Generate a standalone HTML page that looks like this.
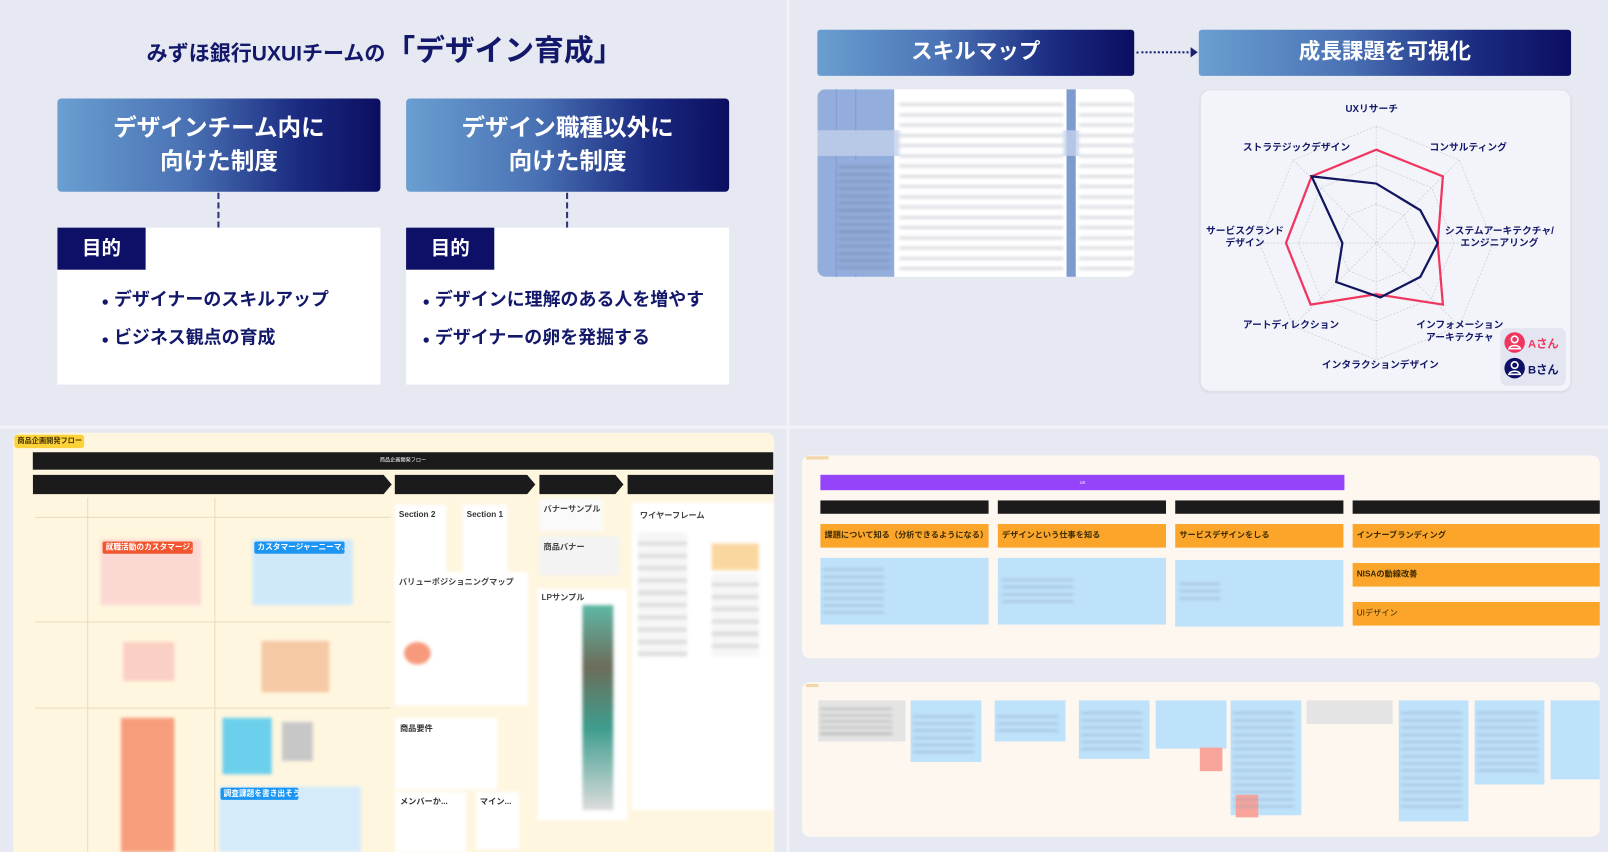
<!DOCTYPE html>
<html><head><meta charset="utf-8">
<style>
*{margin:0;padding:0;box-sizing:border-box}
html,body{width:1608px;height:852px;overflow:hidden;background:#e6e9f2}
body{font-family:"Liberation Sans","Noto Sans CJK JP",sans-serif}
#w{position:absolute;left:0;top:0;width:1568px;height:831px;transform:scale(1.0255);transform-origin:0 0;background:#e6e9f2}
.a{position:absolute}
.hd{background:linear-gradient(90deg,#6a9fd1 0%,#4a72b4 40%,#1a2a80 75%,#0c0e60 100%);border-radius:4px;color:#fff;font-weight:bold;text-align:center}
.nv{color:#13186a;font-weight:bold}
.bl{filter:blur(1.6px)}
.bk{background:#1b1b1b}
.or{background:#fca52b;color:#3a2a00;font-weight:bold;font-size:8px;padding:6px 4px;line-height:10px}
.sb{background:#bfe2fb}
.gr{background:#e4e4e4}
.lab{position:absolute;font-size:9.5px;font-weight:bold;color:#13186a;text-align:center;line-height:12px;white-space:nowrap}
.ln{background:repeating-linear-gradient(180deg,transparent 0 3px,#8aa0b8 3px 4px,transparent 4px 7px)}
</style></head><body>
<div id="w">
<div class="a" style="left:767px;top:0;width:3px;height:831px;background:#f1f3f8"></div>
<div class="a" style="left:0;top:415px;width:1568px;height:3px;background:#f1f3f8"></div>

<!-- TOP LEFT -->
<div class="a nv" style="left:143px;top:26px;white-space:nowrap"><span style="font-size:20.5px">みずほ銀行UXUIチームの</span><span style="font-size:29px">「デザイン育成」</span></div>
<div class="a hd" style="left:56px;top:96px;width:315px;height:91px;font-size:23px;line-height:33px;padding-top:12px">デザインチーム内に<br>向けた制度</div>
<div class="a hd" style="left:396px;top:96px;width:315px;height:91px;font-size:23px;line-height:33px;padding-top:12px">デザイン職種以外に<br>向けた制度</div>
<div class="a" style="left:212px;top:188px;height:34px;border-left:2px dashed #2c3378"></div>
<div class="a" style="left:552px;top:188px;height:34px;border-left:2px dashed #2c3378"></div>
<div class="a" style="left:56px;top:222px;width:315px;height:153px;background:#fff"></div>
<div class="a" style="left:396px;top:222px;width:315px;height:153px;background:#fff"></div>
<div class="a" style="left:56px;top:222px;width:86px;height:41px;background:#0d1066;color:#fff;font-size:19px;font-weight:bold;line-height:41px;padding-left:24px">目的</div>
<div class="a" style="left:396px;top:222px;width:86px;height:41px;background:#0d1066;color:#fff;font-size:19px;font-weight:bold;line-height:41px;padding-left:24px">目的</div>
<div class="a nv" style="left:99px;top:275px;font-size:17.5px;line-height:35px;white-space:nowrap"><span style="font-size:12px">●</span> デザイナーのスキルアップ<br><span style="font-size:12px">●</span> ビジネス観点の育成</div>
<div class="a nv" style="left:412px;top:275px;font-size:17.5px;line-height:35px;white-space:nowrap"><span style="font-size:12px">●</span> デザインに理解のある人を増やす<br><span style="font-size:12px">●</span> デザイナーの卵を発掘する</div>

<!-- TOP RIGHT -->
<div class="a hd" style="left:797px;top:29px;width:309px;height:45px;font-size:21px;line-height:43px;border-radius:3px">スキルマップ</div>
<div class="a hd" style="left:1169px;top:29px;width:363px;height:45px;font-size:21px;line-height:43px;border-radius:3px">成長課題を可視化</div>
<div class="a" style="left:1108px;top:50px;width:55px;border-top:2px dotted #1a2070"></div>
<div class="a" style="left:1161px;top:46px;width:0;height:0;border-left:7px solid #1a2070;border-top:5px solid transparent;border-bottom:5px solid transparent"></div>
<div class="a" style="left:797px;top:87px;width:309px;height:183px;border-radius:8px;overflow:hidden;background:#fff">
 <div class="a" style="left:0;top:0;width:75px;height:183px;background:#93aedc"></div>
 <div class="a" style="left:18px;top:0;width:1px;height:183px;background:#7e9bd0"></div>
 <div class="a" style="left:37px;top:0;width:1px;height:183px;background:#7e9bd0"></div>
 <div class="a" style="left:243px;top:0;width:9px;height:183px;background:#7e9bd0"></div>
 <div class="a" style="left:0;top:40px;width:309px;height:25px;background:#c2d0ea;opacity:.8"></div>
 <div class="a bl" style="left:80px;top:10px;width:160px;height:170px;background:repeating-linear-gradient(180deg,#fff 0 4px,#c8cbd3 4px 6px,#fff 6px 10px)"></div>
 <div class="a bl" style="left:255px;top:10px;width:54px;height:170px;background:repeating-linear-gradient(180deg,#fff 0 4px,#c8cbd3 4px 6px,#fff 6px 10px)"></div>
 <div class="a bl" style="left:20px;top:70px;width:52px;height:110px;background:repeating-linear-gradient(180deg,#93aedc 0 5px,#7b8fb8 5px 7px)"></div>
</div>
<div class="a" style="left:1170px;top:87px;width:362px;height:295px;background:#f3f4f9;border:1px solid #dfe1ea;border-radius:10px;box-shadow:0 1px 2px rgba(0,0,0,.06)"></div>
<svg class="a" style="left:1170px;top:87px" width="362" height="295" viewBox="1170 87 362 295">
 <g fill="none" stroke="#cfd1d9" stroke-width="0.8" stroke-dasharray="2 1.5">
  <polygon points="1342,123 1423,156 1456,237 1423,318 1342,351 1261,318 1228,237 1261,156"/>
  <polygon points="1342,161 1396,183 1418,237 1396,291 1342,313 1288,291 1266,237 1288,183"/>
  <polygon points="1342,199 1369,210 1380,237 1369,264 1342,275 1315,264 1304,237 1315,210"/>
  <line x1="1342" y1="123" x2="1342" y2="351"/><line x1="1228" y1="237" x2="1456" y2="237"/>
  <line x1="1261" y1="156" x2="1423" y2="318"/><line x1="1423" y1="156" x2="1261" y2="318"/>
 </g>
 <polygon points="1342,146 1407,172 1402,237 1407,297 1342,287 1278,297 1254,237 1279,172" fill="none" stroke="#f0365f" stroke-width="2.2"/>
 <polygon points="1342,179 1385,205 1402,237 1385,270 1346,290 1303,275 1309,237 1279,172" fill="none" stroke="#12165f" stroke-width="2.2"/>
</svg>
<div class="lab" style="left:1312px;top:101px">UXリサーチ</div>
<div class="lab" style="left:1212px;top:139px">ストラテジックデザイン</div>
<div class="lab" style="left:1394px;top:139px">コンサルティング</div>
<div class="lab" style="left:1176px;top:220px">サービスグランド<br>デザイン</div>
<div class="lab" style="left:1409px;top:220px">システムアーキテクチャ/<br>エンジニアリング</div>
<div class="lab" style="left:1212px;top:312px">アートディレクション</div>
<div class="lab" style="left:1381px;top:312px">インフォメーション<br>アーキテクチャ</div>
<div class="lab" style="left:1289px;top:351px">インタラクションデザイン</div>
<div class="a" style="left:1463px;top:320px;width:64px;height:56px;background:#e3e5f0;border-radius:6px"></div>
<svg class="a" style="left:1466px;top:323px" width="22" height="50">
 <circle cx="11" cy="11" r="10" fill="#f0365f"/><circle cx="11" cy="8" r="3.2" fill="none" stroke="#fff" stroke-width="1.6"/><path d="M5.5 17c1-4 10-4 11 0z" fill="none" stroke="#fff" stroke-width="1.6"/>
 <circle cx="11" cy="36" r="10" fill="#0d1066"/><circle cx="11" cy="33" r="3.2" fill="none" stroke="#fff" stroke-width="1.6"/><path d="M5.5 42c1-4 10-4 11 0z" fill="none" stroke="#fff" stroke-width="1.6"/>
</svg>
<div class="a" style="left:1490px;top:327px;font-size:11px;font-weight:bold;color:#f0365f">Aさん</div>
<div class="a" style="left:1490px;top:352px;font-size:11px;font-weight:bold;color:#13186a">Bさん</div>

<!-- BOTTOM LEFT -->
<div class="a" style="left:13px;top:422px;width:742px;height:409px;background:#fff6df;border-radius:8px 8px 0 0"></div>
<div class="a" style="left:14px;top:424px;width:68px;height:13px;background:#fcd238;border-radius:3px;font-size:7px;font-weight:bold;color:#443300;line-height:13px;padding-left:3px">商品企画開発フロー</div>
<div class="a bk" style="left:32px;top:441px;width:722px;height:17px;color:#fff;font-size:5px;text-align:center;line-height:17px">商品企画開発フロー</div>
<svg class="a" style="left:32px;top:463px" width="722" height="19">
 <polygon points="0,0 342,0 350,9.5 342,19 0,19" fill="#1b1b1b"/>
 <polygon points="353,0 482,0 490,9.5 482,19 353,19" fill="#1b1b1b"/>
 <polygon points="494,0 568,0 576,9.5 568,19 494,19" fill="#1b1b1b"/>
 <polygon points="580,0 722,0 722,19 580,19" fill="#1b1b1b"/>
</svg>
<div class="a" style="left:85px;top:485px;width:1px;height:346px;background:#e8dcc0"></div>
<div class="a" style="left:209px;top:485px;width:1px;height:346px;background:#e8dcc0"></div>
<div class="a" style="left:34px;top:504px;width:347px;height:1px;background:#e8dcc0"></div>
<div class="a" style="left:34px;top:606px;width:347px;height:1px;background:#e8dcc0"></div>
<div class="a" style="left:34px;top:690px;width:347px;height:1px;background:#e8dcc0"></div>
<div class="a bl" style="left:98px;top:526px;width:98px;height:64px;background:#fbd9d2"></div>
<div class="a" style="left:100px;top:528px;width:88px;height:12px;background:#f2562f;color:#fff;font-size:7.5px;font-weight:bold;line-height:12px;padding-left:3px;border-radius:2px;overflow:hidden;white-space:nowrap">就職活動のカスタマージ...</div>
<div class="a bl" style="left:246px;top:526px;width:98px;height:64px;background:#cfe9fb"></div>
<div class="a" style="left:248px;top:528px;width:88px;height:12px;background:#1c96f2;color:#fff;font-size:7.5px;font-weight:bold;line-height:12px;padding-left:3px;border-radius:2px;overflow:hidden;white-space:nowrap">カスタマージャーニーマ...</div>
<div class="a bl" style="left:120px;top:626px;width:50px;height:38px;background:#fbd0c4"></div>
<div class="a bl" style="left:255px;top:625px;width:66px;height:50px;background:#f5c9a4"></div>
<div class="a bl" style="left:118px;top:700px;width:52px;height:131px;background:#f79d7c"></div>
<div class="a bl" style="left:217px;top:700px;width:48px;height:55px;background:#6cd0ec"></div>
<div class="a bl" style="left:275px;top:704px;width:30px;height:38px;background:#c7c7c7"></div>
<div class="a bl" style="left:214px;top:767px;width:138px;height:64px;background:#d5ebfa"></div>
<div class="a" style="left:215px;top:768px;width:76px;height:12px;background:#1c96f2;color:#fff;font-size:7.5px;font-weight:bold;line-height:12px;padding-left:3px;border-radius:2px;overflow:hidden;white-space:nowrap">調査課題を書き出そう</div>
<div class="a bl" style="left:385px;top:492px;width:50px;height:82px;background:#fff"></div>
<div class="a bl" style="left:451px;top:492px;width:44px;height:82px;background:#fff"></div>
<div class="a" style="left:389px;top:497px;font-size:8px;font-weight:bold;color:#333">Section 2</div>
<div class="a" style="left:455px;top:497px;font-size:8px;font-weight:bold;color:#333">Section 1</div>
<div class="a bl" style="left:385px;top:558px;width:130px;height:130px;background:#fff"></div>
<div class="a" style="left:389px;top:562px;font-size:8px;font-weight:bold;color:#444">バリューポジショニングマップ</div>
<div class="a bl" style="left:394px;top:626px;width:26px;height:22px;background:#f79a7c;border-radius:50%"></div>
<div class="a bl" style="left:385px;top:700px;width:100px;height:70px;background:#fff"></div>
<div class="a" style="left:390px;top:705px;font-size:8px;font-weight:bold;color:#333">商品要件</div>
<div class="a bl" style="left:385px;top:772px;width:70px;height:59px;background:#fff"></div>
<div class="a bl" style="left:464px;top:772px;width:42px;height:56px;background:#fff"></div>
<div class="a" style="left:390px;top:776px;font-size:8px;font-weight:bold;color:#333">メンバーか...</div>
<div class="a" style="left:468px;top:776px;font-size:8px;font-weight:bold;color:#333">マイン...</div>
<div class="a bl" style="left:526px;top:486px;width:62px;height:32px;background:#fafafa"></div>
<div class="a" style="left:530px;top:491px;font-size:8px;font-weight:bold;color:#444">バナーサンプル</div>
<div class="a bl" style="left:526px;top:523px;width:78px;height:38px;background:#f3f3f3"></div>
<div class="a" style="left:530px;top:528px;font-size:8px;font-weight:bold;color:#444">商品バナー</div>
<div class="a bl" style="left:524px;top:574px;width:88px;height:226px;background:#fff"></div>
<div class="a" style="left:528px;top:577px;font-size:8px;font-weight:bold;color:#444">LPサンプル</div>
<div class="a bl" style="left:568px;top:590px;width:30px;height:200px;background:linear-gradient(#5fb8a6,#6d6d5a 30%,#3e9d8e 60%,#ddd)"></div>
<div class="a bl" style="left:616px;top:490px;width:138px;height:300px;background:#fff"></div>
<div class="a" style="left:624px;top:497px;font-size:8px;font-weight:bold;color:#444">ワイヤーフレーム</div>
<div class="a bl" style="left:622px;top:520px;width:48px;height:120px;background:repeating-linear-gradient(180deg,#f6f6f6 0 8px,#ddd 8px 12px)"></div>
<div class="a bl" style="left:694px;top:530px;width:46px;height:26px;background:#fbd7a0"></div>
<div class="a bl" style="left:694px;top:560px;width:46px;height:80px;background:repeating-linear-gradient(180deg,#f6f6f6 0 8px,#ddd 8px 12px)"></div>

<!-- BOTTOM RIGHT -->
<div class="a" style="left:782px;top:444px;width:778px;height:198px;background:#fdf7f0;border-radius:8px"></div>
<div class="a" style="left:786px;top:445px;width:22px;height:3px;background:#f0d7a5"></div>
<div class="a" style="left:800px;top:463px;width:511px;height:15px;background:#9644fa;color:#fff;font-size:4px;text-align:center;line-height:15px">UX</div>
<div class="a bk" style="left:800px;top:488px;width:164px;height:13px"></div>
<div class="a bk" style="left:973px;top:488px;width:164px;height:13px"></div>
<div class="a bk" style="left:1146px;top:488px;width:164px;height:13px"></div>
<div class="a bk" style="left:1319px;top:488px;width:241px;height:13px"></div>
<div class="a or" style="left:800px;top:511px;width:164px;height:23px">課題について知る（分析できるようになる）</div>
<div class="a or" style="left:973px;top:511px;width:164px;height:23px">デザインという仕事を知る</div>
<div class="a or" style="left:1146px;top:511px;width:164px;height:23px">サービスデザインをしる</div>
<div class="a or" style="left:1319px;top:511px;width:241px;height:23px">インナーブランディング</div>
<div class="a sb" style="left:800px;top:544px;width:164px;height:65px"></div>
<div class="a sb" style="left:973px;top:544px;width:164px;height:65px"></div>
<div class="a sb" style="left:1146px;top:546px;width:164px;height:65px"></div>
<div class="a or" style="left:1319px;top:549px;width:241px;height:23px">NISAの動線改善</div>
<div class="a or" style="left:1319px;top:587px;width:241px;height:23px;font-weight:normal">UIデザイン</div>
<div class="a bl ln" style="left:802px;top:552px;width:60px;height:50px"></div>
<div class="a bl ln" style="left:977px;top:562px;width:70px;height:28px"></div>
<div class="a bl ln" style="left:1150px;top:566px;width:40px;height:20px"></div>

<div class="a" style="left:782px;top:665px;width:778px;height:151px;background:#fdf7f0;border-radius:8px"></div>
<div class="a" style="left:786px;top:667px;width:12px;height:3px;background:#f0d7a5"></div>
<div class="a gr" style="left:798px;top:683px;width:85px;height:40px"></div>
<div class="a sb" style="left:888px;top:683px;width:69px;height:60px"></div>
<div class="a sb" style="left:970px;top:683px;width:69px;height:40px"></div>
<div class="a sb" style="left:1052px;top:683px;width:69px;height:57px"></div>
<div class="a sb" style="left:1127px;top:683px;width:69px;height:47px"></div>
<div class="a" style="left:1170px;top:729px;width:22px;height:23px;background:#f9a59b"></div>
<div class="a sb" style="left:1200px;top:683px;width:69px;height:112px"></div>
<div class="a" style="left:1205px;top:775px;width:22px;height:22px;background:#f9a59b"></div>
<div class="a gr" style="left:1274px;top:683px;width:84px;height:23px"></div>
<div class="a sb" style="left:1364px;top:683px;width:68px;height:118px"></div>
<div class="a sb" style="left:1438px;top:683px;width:68px;height:82px"></div>
<div class="a sb" style="left:1512px;top:683px;width:48px;height:77px"></div>
<div class="a bl" style="left:800px;top:688px;width:70px;height:30px;background:repeating-linear-gradient(180deg,transparent 0 3px,#999 3px 4px,transparent 4px 6px)"></div>
<div class="a bl ln" style="left:890px;top:695px;width:60px;height:40px"></div>
<div class="a bl ln" style="left:972px;top:695px;width:60px;height:22px"></div>
<div class="a bl ln" style="left:1054px;top:692px;width:60px;height:40px"></div>
<div class="a bl ln" style="left:1202px;top:692px;width:60px;height:95px"></div>
<div class="a bl ln" style="left:1366px;top:692px;width:60px;height:100px"></div>
<div class="a bl ln" style="left:1440px;top:692px;width:60px;height:65px"></div>
</div>
</body></html>
